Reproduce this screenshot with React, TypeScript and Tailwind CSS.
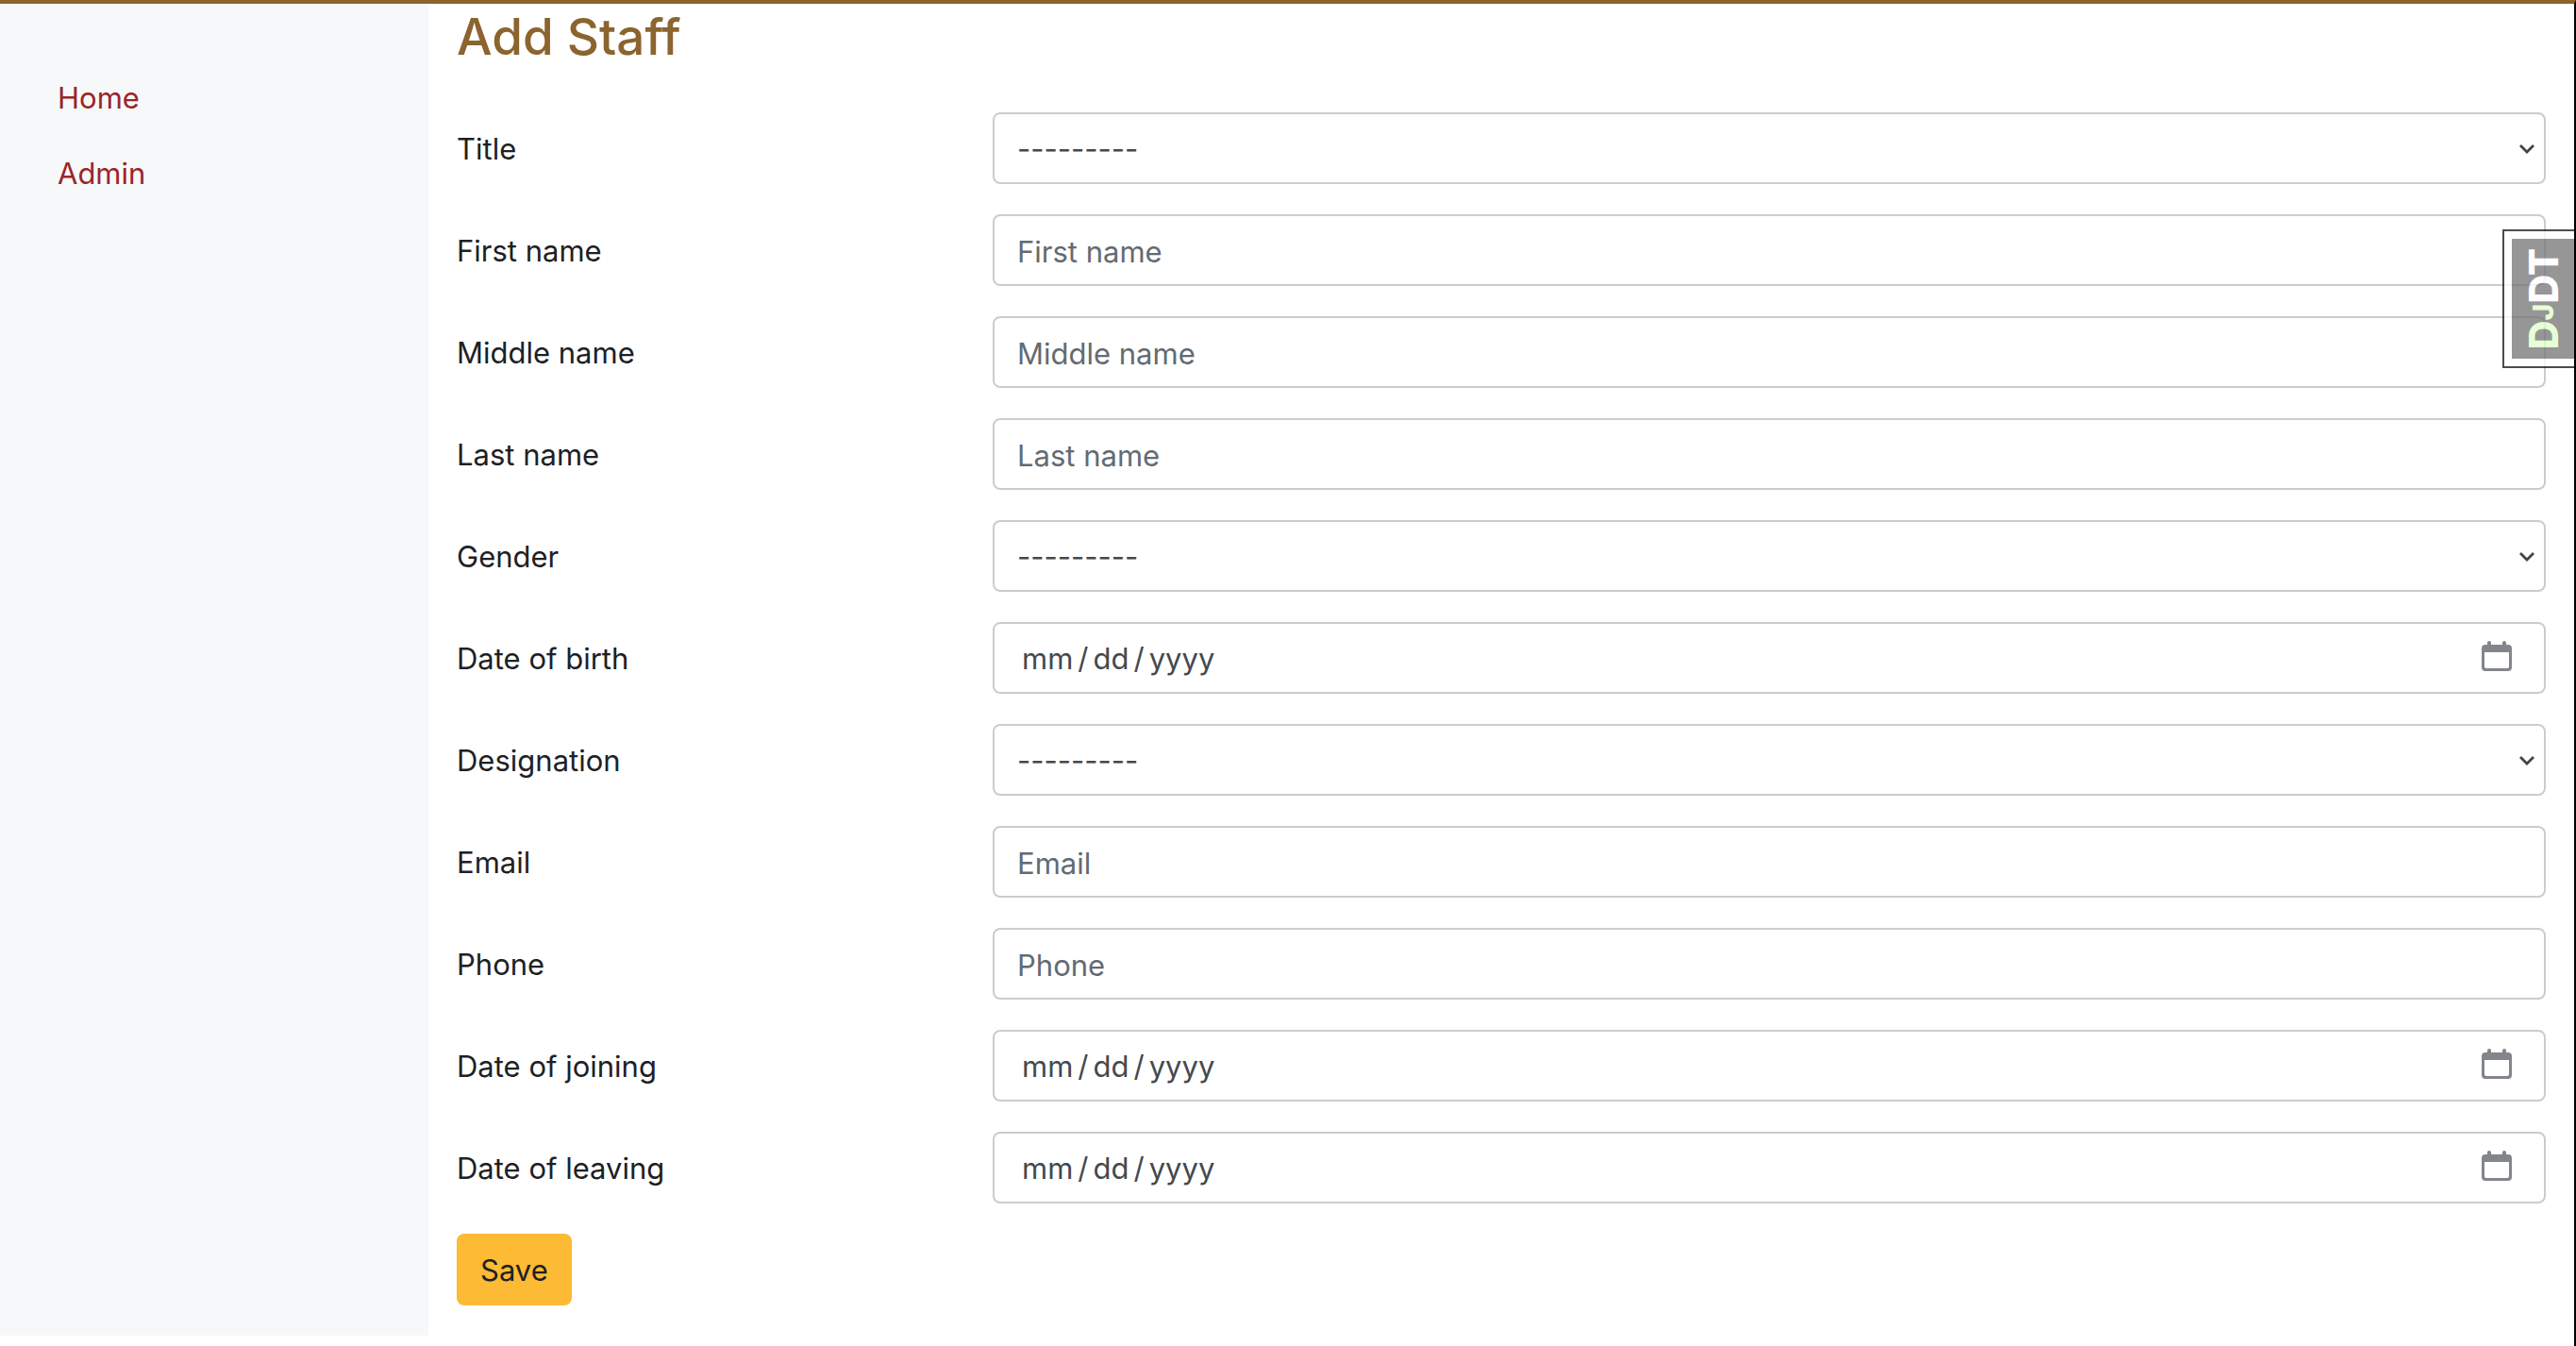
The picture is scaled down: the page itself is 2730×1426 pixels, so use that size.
import React from "react";

type FieldKind = "select" | "text" | "date";

interface Field {
  id: string;
  label: string;
  kind: FieldKind;
}

const fields: Field[] = [
  { id: "title", label: "Title", kind: "select" },
  { id: "first_name", label: "First name", kind: "text" },
  { id: "middle_name", label: "Middle name", kind: "text" },
  { id: "last_name", label: "Last name", kind: "text" },
  { id: "gender", label: "Gender", kind: "select" },
  { id: "date_of_birth", label: "Date of birth", kind: "date" },
  { id: "designation", label: "Designation", kind: "select" },
  { id: "email", label: "Email", kind: "text" },
  { id: "phone", label: "Phone", kind: "text" },
  { id: "date_of_joining", label: "Date of joining", kind: "date" },
  { id: "date_of_leaving", label: "Date of leaving", kind: "date" },
];

const controlClass =
  "block h-[76px] w-full appearance-none rounded-lg border-2 border-[#c8cdd3] bg-white px-6 pt-0.5 text-[#43494f] outline-none placeholder:text-[#626b72] placeholder:opacity-100 focus:border-[#80bdff]";

function Chevron() {
  return (
    <svg
      className="pointer-events-none absolute top-8 right-3 h-3 w-4"
      viewBox="0 0 16 12"
      fill="none"
      stroke="#3f454b"
      strokeWidth="2.8"
      aria-hidden="true"
    >
      <path d="M1 3l7 7 7-7" />
    </svg>
  );
}

function CalendarIcon() {
  return (
    <svg
      className="pointer-events-none absolute top-5 right-9 h-8 w-8"
      viewBox="0 0 32 32"
      fill="#82868b"
      aria-hidden="true"
    >
      <path
        d="M6 4V2a2 2 0 0 1 4 0v2h12V2a2 2 0 0 1 4 0v2h2a4 4 0 0 1 4 4v20a4 4 0 0 1-4 4H4a4 4 0 0 1-4-4V8a4 4 0 0 1 4-4zM3 12v15a2 2 0 0 0 2 2h22a2 2 0 0 0 2-2V12z"
        fillRule="evenodd"
      />
    </svg>
  );
}

function Control({ field }: { field: Field }) {
  if (field.kind === "select") {
    return (
      <div className="relative">
        <select id={field.id} className={controlClass}>
          <option value="">---------</option>
        </select>
        <Chevron />
      </div>
    );
  }
  if (field.kind === "date") {
    return (
      <div className="relative">
        <input
          id={field.id}
          type="date"
          className={`${controlClass} [&::-webkit-calendar-picker-indicator]:opacity-0 [&::-webkit-datetime-edit-day-field]:px-[5px] [&::-webkit-datetime-edit-month-field]:px-[5px] [&::-webkit-datetime-edit-year-field]:px-[5px]`}
        />
        <CalendarIcon />
      </div>
    );
  }
  return <input id={field.id} type="text" placeholder={field.label} className={controlClass} />;
}

export default function App() {
  return (
    <div className="min-h-screen overflow-x-clip border-t-4 border-r-2 border-t-[#8b642e] border-r-black bg-white font-['Inter','Liberation_Sans',sans-serif] text-[31px] leading-[48px] text-[#1d2124]">
      <div className="grid grid-cols-[454fr_2274fr]">
        <nav className="bg-[#f7f8fa] px-[30px] pt-[60px]">
          <ul>
            {["Home", "Admin"].map((name) => (
              <li key={name}>
                <a href="#" className="block px-[31px] py-4 text-[#9b2527]">
                  {name}
                </a>
              </li>
            ))}
          </ul>
        </nav>

        <main className="min-w-0 px-[30px] pb-8">
          <h3 className="mb-11 text-[53px] leading-[71px] font-medium text-[#8b642e]">
            Add Staff
          </h3>
          <form onSubmit={(e) => e.preventDefault()}>
            {fields.map((field) => (
              <div key={field.id} className="-mx-[30px] mb-8 grid grid-cols-[568fr_1706fr]">
                <label htmlFor={field.id} className="px-[30px] pt-[15px]">
                  {field.label}
                </label>
                <div className="min-w-0 px-[30px]">
                  <Control field={field} />
                </div>
              </div>
            ))}
            <button type="submit" className="h-[76px] rounded-lg bg-[#fdba35] px-[25px] pt-0.5">
              Save
            </button>
          </form>
        </main>
      </div>

      <button
        type="button"
        aria-label="Show toolbar"
        className="fixed top-[243px] right-0.5 h-[147px] border-2 border-r-0 border-[#111] bg-white p-2 pr-0 opacity-75"
      >
        <span className="flex h-full w-[66px] items-center justify-center bg-black/55 font-['Inter','Liberation_Sans',sans-serif] text-[43px] font-extrabold text-white">
          <span className="rotate-180 [writing-mode:vertical-rl]">
            <span className="text-[#dfffc8]">
              D<span className="text-[30px]">J</span>
            </span>
            DT
          </span>
        </span>
      </button>
    </div>
  );
}
